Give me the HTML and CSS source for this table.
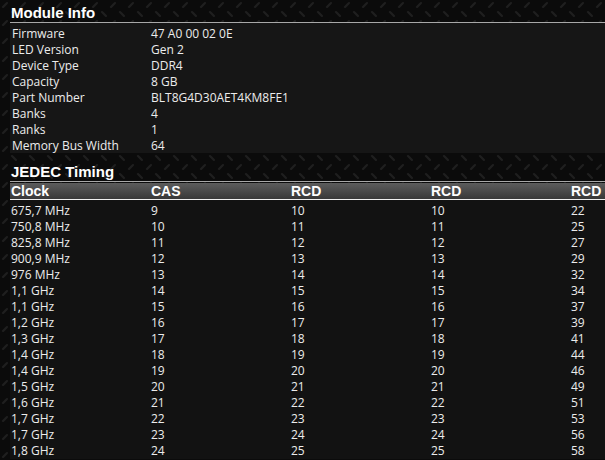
FILE: index.html
```html
<!DOCTYPE html>
<html>
<head>
<meta charset="utf-8">
<link rel="stylesheet" href="styles.css">
</head>
<body>
<div class="page">
  <h2 class="section-title">Module Info</h2>
  <div class="info-panel">
    <div class="info-row"><span class="info-key">Firmware</span><span>47 A0 00 02 0E</span></div>
    <div class="info-row"><span class="info-key">LED Version</span><span>Gen 2</span></div>
    <div class="info-row"><span class="info-key">Device Type</span><span>DDR4</span></div>
    <div class="info-row"><span class="info-key">Capacity</span><span>8 GB</span></div>
    <div class="info-row"><span class="info-key">Part Number</span><span>BLT8G4D30AET4KM8FE1</span></div>
    <div class="info-row"><span class="info-key">Banks</span><span>4</span></div>
    <div class="info-row"><span class="info-key">Ranks</span><span>1</span></div>
    <div class="info-row"><span class="info-key">Memory Bus Width</span><span>64</span></div>
  </div>
  <h2 class="section-title jedec">JEDEC Timing</h2>
  <div class="timing">
    <div class="t-head"><span>Clock</span><span>CAS</span><span>RCD</span><span>RCD</span><span>RCD</span></div>
    <div class="t-body">
      <div class="t-row"><span>675,7 MHz</span><span>9</span><span>10</span><span>10</span><span>22</span></div>
      <div class="t-row"><span>750,8 MHz</span><span>10</span><span>11</span><span>11</span><span>25</span></div>
      <div class="t-row"><span>825,8 MHz</span><span>11</span><span>12</span><span>12</span><span>27</span></div>
      <div class="t-row"><span>900,9 MHz</span><span>12</span><span>13</span><span>13</span><span>29</span></div>
      <div class="t-row"><span>976 MHz</span><span>13</span><span>14</span><span>14</span><span>32</span></div>
      <div class="t-row"><span>1,1 GHz</span><span>14</span><span>15</span><span>15</span><span>34</span></div>
      <div class="t-row"><span>1,1 GHz</span><span>15</span><span>16</span><span>16</span><span>37</span></div>
      <div class="t-row"><span>1,2 GHz</span><span>16</span><span>17</span><span>17</span><span>39</span></div>
      <div class="t-row"><span>1,3 GHz</span><span>17</span><span>18</span><span>18</span><span>41</span></div>
      <div class="t-row"><span>1,4 GHz</span><span>18</span><span>19</span><span>19</span><span>44</span></div>
      <div class="t-row"><span>1,4 GHz</span><span>19</span><span>20</span><span>20</span><span>46</span></div>
      <div class="t-row"><span>1,5 GHz</span><span>20</span><span>21</span><span>21</span><span>49</span></div>
      <div class="t-row"><span>1,6 GHz</span><span>21</span><span>22</span><span>22</span><span>51</span></div>
      <div class="t-row"><span>1,7 GHz</span><span>22</span><span>23</span><span>23</span><span>53</span></div>
      <div class="t-row"><span>1,7 GHz</span><span>23</span><span>24</span><span>24</span><span>56</span></div>
      <div class="t-row"><span>1,8 GHz</span><span>24</span><span>25</span><span>25</span><span>58</span></div>
    </div>
  </div>
</div>
</body>
</html>
```
FILE: styles.css
```css
html, body {
  margin: 0;
  padding: 0;
  height: 100%;
  overflow: hidden;
}
body {
  background-color: #0b0b0b;
  background-image: url("data:image/svg+xml;utf8,<svg xmlns='http://www.w3.org/2000/svg' width='18' height='18'><g stroke='%231f1f1f' stroke-width='2' stroke-linecap='round'><line x1='3' y1='7' x2='7' y2='3'/><line x1='12' y1='12' x2='16' y2='16'/></g></svg>");
  background-size: 18px 18px;
  font-family: "Open Sans", "Noto Sans", sans-serif;
  font-size: 12px;
  color: #ececec;
}
.page {
  padding-left: 10px;
}
.section-title {
  margin: 0;
  height: 23px;
  box-sizing: border-box;
  padding-top: 5px;
  padding-left: 1px;
  font-family: "Liberation Sans", Arial, sans-serif;
  font-weight: bold;
  font-size: 15px;
  line-height: 16px;
  color: #ffffff;
  border-bottom: 1px solid #a8a8a8;
}
.info-panel {
  background: #161616;
  padding: 3px 0 0 2px;
  height: 130px;
  box-sizing: border-box;
}
.info-row {
  display: flex;
  height: 16px;
  line-height: 16px;
}
.info-key {
  width: 139px;
}
.jedec {
  height: 29px;
  padding-top: 11px;
}
.timing {
  margin-top: 1px;
}
.t-head {
  display: grid;
  grid-template-columns: 140px 140px 140px 140px 1fr;
  height: 16px;
  line-height: 16px;
  padding-left: 1px;
  background: linear-gradient(#5c5c5c, #383838);
  border-bottom: 1px solid #f0f0f0;
  font-family: "Liberation Sans", Arial, sans-serif;
  font-weight: bold;
  font-size: 14px;
  color: #ffffff;
  white-space: nowrap;
}
.t-body {
  background: #121212;
  padding: 3px 0 0;
}
.t-row {
  display: grid;
  grid-template-columns: 140px 140px 140px 140px 1fr;
  height: 16px;
  box-sizing: border-box;
  padding-top: 1px;
  line-height: 14px;
  padding-left: 1px;
  white-space: nowrap;
}
```
